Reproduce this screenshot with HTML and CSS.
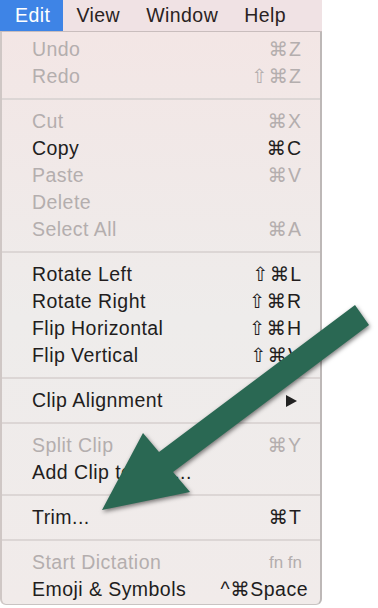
FILE: index.html
```html
<!DOCTYPE html>
<html lang="en">
<head>
<meta charset="UTF-8">
<meta name="viewport" content="width=device-width, initial-scale=1.0">
<title>Edit menu</title>
<link rel="stylesheet" href="styles.css">
</head>
<body>

<div class="screen">
  <nav class="menubar">
    <span class="menubar-item active">Edit</span>
    <span class="menubar-item">View</span>
    <span class="menubar-item">Window</span>
    <span class="menubar-item">Help</span>
  </nav>

  <div class="menu">
    <div class="item off"><span>Undo</span><span class="key">⌘Z</span></div>
    <div class="item off"><span>Redo</span><span class="key">⇧⌘Z</span></div>
    <div class="sep"></div>
    <div class="item off"><span>Cut</span><span class="key">⌘X</span></div>
    <div class="item"><span>Copy</span><span class="key">⌘C</span></div>
    <div class="item off"><span>Paste</span><span class="key">⌘V</span></div>
    <div class="item off"><span>Delete</span><span class="key"></span></div>
    <div class="item off"><span>Select All</span><span class="key">⌘A</span></div>
    <div class="sep"></div>
    <div class="item"><span>Rotate Left</span><span class="key">⇧⌘L</span></div>
    <div class="item"><span>Rotate Right</span><span class="key">⇧⌘R</span></div>
    <div class="item"><span>Flip Horizontal</span><span class="key">⇧⌘H</span></div>
    <div class="item"><span>Flip Vertical</span><span class="key">⇧⌘V</span></div>
    <div class="sep"></div>
    <div class="item"><span>Clip Alignment</span><span class="submenu"></span></div>
    <div class="sep"></div>
    <div class="item off"><span>Split Clip</span><span class="key">⌘Y</span></div>
    <div class="item"><span>Add Clip to End...</span><span class="key"></span></div>
    <div class="sep"></div>
    <div class="item"><span>Trim...</span><span class="key">⌘T</span></div>
    <div class="sep"></div>
    <div class="item off"><span>Start Dictation</span><span class="key small">fn fn</span></div>
    <div class="item"><span>Emoji &amp; Symbols</span><span class="key wide">^⌘Space</span></div>
  </div>
</div>

<!-- the big green arrow pasted on top of the screenshot -->
<svg class="arrow" width="378" height="608" viewBox="0 0 378 608">
  <polygon points="355,305 369,325 173,472 190,492 102,510 143,433 159,452" fill="#2a6853"/>
</svg>

</body>
</html>
```

FILE: styles.css
```css
body {
  margin: 0;
  background: #ffffff;
  font-family: "Liberation Sans", "DejaVu Sans", sans-serif;
  font-size: 19.5px;
  letter-spacing: 0.45px;
  color: #221d1d;
}

.screen {
  width: 322px;
}

.menubar {
  display: flex;
  height: 31px;
  align-items: center;
  background: #f0e2e4;
  border-bottom: 1px solid #c9bdbd;
}

.menubar-item {
  height: 31px;
  line-height: 31px;
  padding: 0 13px;
  color: #2a2222;
}

.menubar-item.active {
  padding-left: 15px;
  padding-right: 13px;
  background: #3e84e6;
  color: #ffffff;
}

.menu {
  height: 573px;
  padding-top: 4px;
  box-sizing: border-box;
  background: linear-gradient(#f3e6e5, #eeeceb 50%, #f1ebea);
  border-left: 2px solid #cfc7c5;
  border-right: 2px solid #bdb8b7;
  border-bottom: 1px solid #c9c3c2;
  border-radius: 0 0 6px 6px;
}

.item {
  display: flex;
  justify-content: space-between;
  align-items: center;
  height: 27px;
  padding: 0 18px 0 30px;
  white-space: nowrap;
}

.item.off {
  color: #b4aeae;
}

.key {
  letter-spacing: 1px;
}

.key.small {
  font-size: 17px;
  letter-spacing: 0;
}

.key.wide {
  letter-spacing: 0.5px;
  margin-right: -6px;
}

.submenu {
  width: 0;
  height: 0;
  margin-right: 5px;
  border-top: 6.5px solid transparent;
  border-bottom: 6.5px solid transparent;
  border-left: 11px solid #222;
}

.sep {
  height: 18px;
  display: flex;
  align-items: center;
}

.sep::after {
  content: "";
  flex: 1;
  height: 2px;
  background: #dcd6d5;
}

.arrow {
  position: absolute;
  top: 0;
  left: 0;
  pointer-events: none;
  filter: drop-shadow(1.5px 2.5px 2px rgba(0, 0, 0, 0.5));
}
```
